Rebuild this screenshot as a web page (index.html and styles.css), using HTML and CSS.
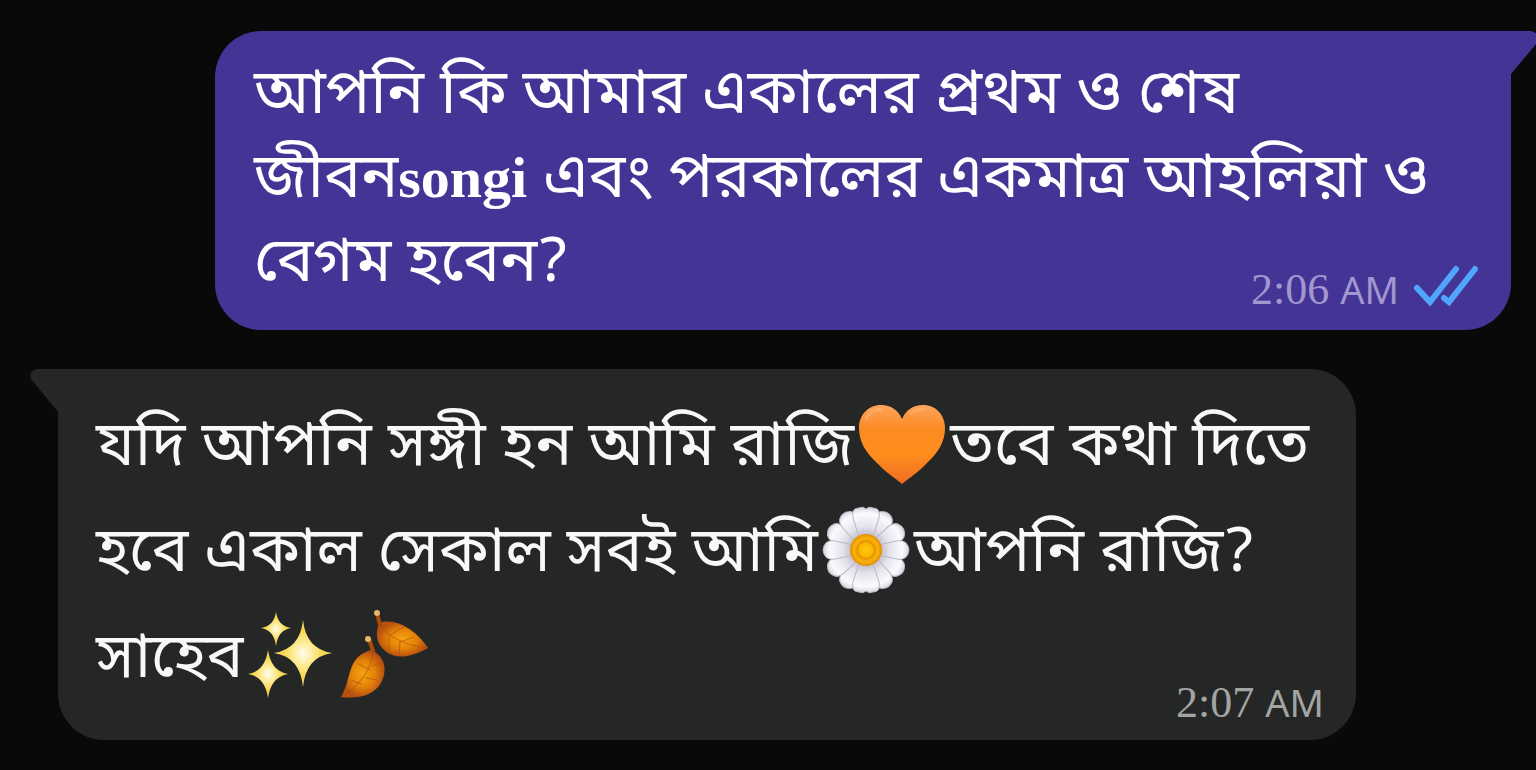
FILE: index.html
```html
<!DOCTYPE html>
<html lang="bn">

<head>
  <meta charset="UTF-8">
  <meta name="viewport" content="width=device-width, initial-scale=1.0">
  <title>Chat</title>
  <link rel="stylesheet" href="styles.css">
</head>

<body>
  <main class="chat">

    <article class="bubble sent">
      <svg class="tail" viewBox="0 0 28 43" aria-hidden="true"><path d="M0 0H20Q28 2 27 8Q27 11 25 13L0 43Z"/></svg>
      <p class="text">আপনি কি আমার একালের প্রথম ও শেষ জীবন<span class="latin">songi</span> এবং পরকালের একমাত্র আহলিয়া ও বেগম হবেন?</p>
      <div class="meta">
        <time datetime="02:06">2:06 <span class="ampm">AM</span></time>
        <svg class="ticks" viewBox="0 0 64 42" role="img" aria-label="Read">
          <path d="M2 20L15 34L41 1M29 30L34 34L60 1"/>
        </svg>
      </div>
    </article>

    <article class="bubble received">
      <svg class="tail" viewBox="0 0 28 43" aria-hidden="true"><path d="M28 0H8Q-2 1 1 10L28 43Z"/></svg>
      <p class="text">যদি আপনি সঙ্গী হন আমি রাজি<svg class="emoji" viewBox="0 0 96 96" role="img" aria-label="🧡">
          <defs>
            <linearGradient id="heart" x1="0" y1="0" x2="0" y2="1">
              <stop offset="0" stop-color="#ffa45c"/>
              <stop offset="0.3" stop-color="#fb8b24"/>
              <stop offset="0.6" stop-color="#ff8f1c"/>
              <stop offset="1" stop-color="#ef6c24"/>
            </linearGradient>
          </defs>
          <path fill="url(#heart)" d="M48 88C44 84 36 80 24 68C11 56 5 45 5 32C5 19 14 9 27 9C37 9 44 14 48 23C52 14 59 9 69 9C82 9 91 19 91 32C91 45 85 56 72 68C60 80 52 84 48 88Z"/>
          <path fill="none" stroke="#ffc188" stroke-opacity="0.4" stroke-width="3" stroke-linecap="round" d="M12 23Q17 13 27 13M57 18Q62 13 70 13"/>
        </svg>তবে কথা দিতে হবে একাল সেকাল সবই আমি<svg class="emoji" viewBox="0 0 96 96" role="img" aria-label="🌼">
          <defs>
            <radialGradient id="petals" gradientUnits="userSpaceOnUse" cx="48" cy="48" r="43">
              <stop offset="0.3" stop-color="#b9b7c3"/>
              <stop offset="0.55" stop-color="#e4e3ec"/>
              <stop offset="0.85" stop-color="#fbfbfe"/>
              <stop offset="1" stop-color="#d6d5de"/>
            </radialGradient>
            <radialGradient id="eye">
              <stop offset="0" stop-color="#ffcb0d"/>
              <stop offset="0.45" stop-color="#f9b500"/>
              <stop offset="0.52" stop-color="#ea9200"/>
              <stop offset="0.75" stop-color="#f7b410"/>
              <stop offset="1" stop-color="#e58a00"/>
            </radialGradient>
            <path id="petal" d="M44 44L35 16Q33 6 41 6Q45 4 48 7Q51 4 55 6Q63 6 61 16L52 44Z"/>
            <path id="small-petal" d="M45 44L40 22Q36 9 44 6Q48 4 52 6Q60 9 56 22L51 44Z"/>
          </defs>
          <circle cx="48" cy="48" r="22" fill="#c3c1cc"/>
          <g fill="url(#petals)" stroke="#b9b7c3" stroke-width="1">
            <use href="#small-petal" transform="rotate(30 48 48)"/>
            <use href="#small-petal" transform="rotate(60 48 48)"/>
            <use href="#small-petal" transform="rotate(120 48 48)"/>
            <use href="#small-petal" transform="rotate(150 48 48)"/>
            <use href="#small-petal" transform="rotate(210 48 48)"/>
            <use href="#small-petal" transform="rotate(240 48 48)"/>
            <use href="#small-petal" transform="rotate(300 48 48)"/>
            <use href="#small-petal" transform="rotate(330 48 48)"/>
            <use href="#petal"/>
            <use href="#small-petal" transform="rotate(90 48 48)"/>
            <use href="#petal" transform="rotate(180 48 48)"/>
            <use href="#small-petal" transform="rotate(270 48 48)"/>
          </g>
          <circle cx="48" cy="48" r="16" fill="url(#eye)"/>
        </svg>আপনি রাজি? সাহেব<svg class="emoji" viewBox="0 0 96 96" role="img" aria-label="✨">
          <defs>
            <radialGradient id="spark">
              <stop offset="0" stop-color="#fffdf0"/>
              <stop offset="0.35" stop-color="#fdeb95"/>
              <stop offset="0.7" stop-color="#f8d648"/>
              <stop offset="1" stop-color="#f0dc8c"/>
            </radialGradient>
          </defs>
          <g fill="url(#spark)">
            <path d="M32 4Q34 18 47 20Q34 22 32 38Q30 22 17 20Q30 18 32 4Z"/>
            <path d="M59 12Q62 41 88 45Q62 49 59 79Q56 49 30 45Q56 41 59 12Z"/>
            <path d="M24 42Q27 63 44 66Q27 69 24 90Q21 69 4 66Q21 63 24 42Z"/>
          </g>
        </svg><svg class="emoji" viewBox="0 0 96 96" role="img" aria-label="🍂">
          <defs>
            <radialGradient id="leaf">
              <stop offset="0" stop-color="#f5a313"/>
              <stop offset="0.55" stop-color="#e58208"/>
              <stop offset="1" stop-color="#b75010"/>
            </radialGradient>
          </defs>
          <path fill="url(#leaf)" d="M39 15C56 9 77 23 88 40C70 50 55 52 44 42C35 34 36 23 39 15Z"/>
          <path fill="url(#leaf)" d="M31 42C45 48 48 62 41 75C33 88 18 91 1 89C8 77 8 66 13 56C17 48 24 44 31 42Z"/>
          <g fill="none" stroke="#a84b0b" stroke-linecap="round">
            <path stroke-width="4" d="M37 5L40 17M29 31L33 43"/>
            <g stroke-width="1" stroke-opacity="0.6">
              <path d="M40 17Q53 36 88 40M50 27L64 19M60 34L74 29M49 28L49 42M60 34L59 47"/>
              <path d="M33 43Q31 70 1 89M31 58L41 55M26 70L37 72M30 62L17 55M21 76L11 72"/>
            </g>
          </g>
          <g fill="#e8b66a"><circle cx="37" cy="5" r="3"/><circle cx="28" cy="31" r="3"/></g>
        </svg></p>
      <div class="meta">
        <time datetime="02:07">2:07 <span class="ampm">AM</span></time>
      </div>
    </article>

  </main>
</body>

</html>
```
FILE: styles.css
```css
body {
  margin: 0;
  background: #090909;
  color: #fff;
  font-family: "Noto Sans Bengali", "Noto Sans", sans-serif;
  overflow-x: hidden;
}

.chat {
  display: flex;
  flex-direction: column;
  gap: 39px;
  padding: 31px 25px 30px 58px;
}

.bubble {
  position: relative;
  display: flex;
  flex-direction: column;
  box-sizing: border-box;
}

.sent {
  margin-left: 157px;
  padding: 24px 32px 20px 39px;
  background: #443496;
  border-radius: 46px 0 46px 46px;
}

.received {
  margin-right: 155px;
  padding: 27px 32px 17px 38px;
  background: #252726;
  border-radius: 0 46px 46px 46px;
}

/* corner that points at the speaker */
.tail {
  position: absolute;
  top: 0;
  width: 28px;
  height: 43px;
}

.sent .tail {
  left: 100%;
  fill: #443496;
}

.received .tail {
  right: 100%;
  fill: #252726;
}

.text {
  margin: 0;
  font-size: 62px;
  line-height: 84px;
}

.received .text {
  line-height: 106px;
  color: #f8f8f8;
}

.latin {
  font-family: "Liberation Serif", serif;
  font-size: 58px;
  font-weight: bold;
  line-height: 1;
}

.emoji {
  width: 96px;
  height: 96px;
  margin: -10px 0;
  vertical-align: -17px;
}

/* sits beside the end of the last line */
.meta {
  display: flex;
  align-self: flex-end;
  align-items: center;
  gap: 16px;
  height: 42px;
  margin-top: -39px;
  font-family: "Liberation Serif", serif;
  font-size: 44px;
  line-height: 42px;
  color: #a297cf;
}

.received .meta {
  margin-top: -33px;
  color: #a3a4a3;
}

.ampm {
  font-family: "Noto Sans", sans-serif;
  font-size: 38px;
}

.ticks {
  width: 64px;
  height: 42px;
  overflow: visible;
  fill: none;
  stroke: #52a5fc;
  stroke-width: 6;
  stroke-linecap: round;
}
```
